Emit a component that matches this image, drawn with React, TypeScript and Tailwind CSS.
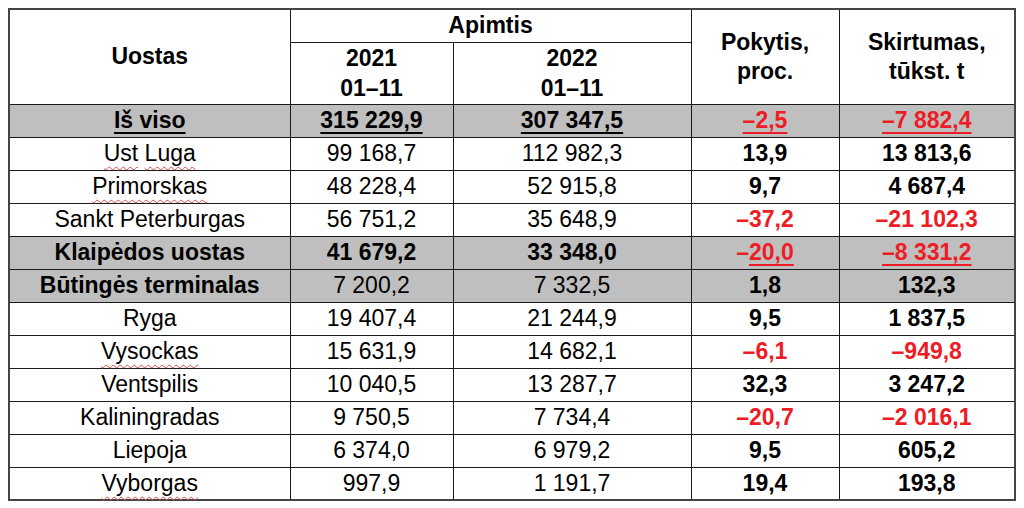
import type { ReactNode } from "react";

const red = "text-[#ee1c24]";
const squiggle = "underline decoration-wavy decoration-[#e04848] decoration-1 underline-offset-[5px]";
const under = "underline decoration-2 underline-offset-[4px]";

type Row = {
  name: ReactNode;
  a: string;
  b: string;
  p: ReactNode;
  s: ReactNode;
  gray?: boolean;
  boldNums?: boolean;
  boldName?: boolean;
};

const Neg = ({ children, line }: { children: ReactNode; line?: boolean }) => (
  <span className={`${red} ${line ? under : ""}`}>{children}</span>
);

const rows: Row[] = [
  {
    name: <span className={under}>Iš viso</span>,
    a: "315 229,9",
    b: "307 347,5",
    p: <Neg line>–2,5</Neg>,
    s: <Neg line>–7 882,4</Neg>,
    gray: true,
    boldNums: true,
    boldName: true,
  },
  {
    name: (
      <>
        <span className={squiggle}>Ust</span> <span className={squiggle}>Luga</span>
      </>
    ),
    a: "99 168,7",
    b: "112 982,3",
    p: "13,9",
    s: "13 813,6",
  },
  { name: <span className={squiggle}>Primorskas</span>, a: "48 228,4", b: "52 915,8", p: "9,7", s: "4 687,4" },
  { name: "Sankt Peterburgas", a: "56 751,2", b: "35 648,9", p: <Neg>–37,2</Neg>, s: <Neg>–21 102,3</Neg> },
  {
    name: "Klaipėdos uostas",
    a: "41 679,2",
    b: "33 348,0",
    p: (
      <span className={red}>
        –<span className={under}>20,0</span>
      </span>
    ),
    s: <Neg line>–8 331,2</Neg>,
    gray: true,
    boldNums: true,
    boldName: true,
  },
  { name: "Būtingės terminalas", a: "7 200,2", b: "7 332,5", p: "1,8", s: "132,3", gray: true, boldName: true },
  { name: "Ryga", a: "19 407,4", b: "21 244,9", p: "9,5", s: "1 837,5" },
  { name: <span className={squiggle}>Vysockas</span>, a: "15 631,9", b: "14 682,1", p: <Neg>–6,1</Neg>, s: <Neg>–949,8</Neg> },
  { name: "Ventspilis", a: "10 040,5", b: "13 287,7", p: "32,3", s: "3 247,2" },
  { name: "Kaliningradas", a: "9 750,5", b: "7 734,4", p: <Neg>–20,7</Neg>, s: <Neg>–2 016,1</Neg> },
  { name: "Liepoja", a: "6 374,0", b: "6 979,2", p: "9,5", s: "605,2" },
  { name: <span className={squiggle}>Vyborgas</span>, a: "997,9", b: "1 191,7", p: "19,4", s: "193,8" },
];

const th = "border border-[#1a1a1a] p-0 text-center align-middle font-bold leading-[29px]";
const td = "border border-[#1a1a1a] p-0 text-center align-middle leading-none";

export default function App() {
  return (
    <div className="min-h-[508px] bg-white p-2 font-['Liberation_Sans',Arial,sans-serif] text-[23px] text-black">
      <table className="w-[1006px] table-fixed border-collapse border-2 border-[#444]">
        <colgroup>
          <col className="w-[281px]" />
          <col className="w-[163px]" />
          <col className="w-[238px]" />
          <col className="w-[148px]" />
          <col className="w-[176px]" />
        </colgroup>
        <thead>
          <tr className="h-[33px]">
            <th rowSpan={2} className={th}>
              Uostas
            </th>
            <th colSpan={2} className={th}>
              Apimtis
            </th>
            <th rowSpan={2} className={th}>
              Pokytis,
              <br />
              proc.
            </th>
            <th rowSpan={2} className={th}>
              Skirtumas,
              <br />
              tūkst. t
            </th>
          </tr>
          <tr className="h-[62px]">
            <th className={`${th} leading-[30px]`}>
              2021
              <br />
              01–11
            </th>
            <th className={`${th} leading-[30px]`}>
              2022
              <br />
              01–11
            </th>
          </tr>
        </thead>
        <tbody>
          {rows.map((r, i) => (
            <tr key={i} className={`h-[33px] ${r.gray ? "bg-[#bfbfbf]" : ""}`}>
              <td className={`${td} ${r.boldName ? "font-bold" : ""}`}>{r.name}</td>
              <td className={`${td} ${r.boldNums ? "font-bold" : ""}`}>
                <span className={i === 0 ? under : ""}>{r.a}</span>
              </td>
              <td className={`${td} ${r.boldNums ? "font-bold" : ""}`}>
                <span className={i === 0 ? under : ""}>{r.b}</span>
              </td>
              <td className={`${td} font-bold`}>{r.p}</td>
              <td className={`${td} font-bold`}>{r.s}</td>
            </tr>
          ))}
        </tbody>
      </table>
    </div>
  );
}
